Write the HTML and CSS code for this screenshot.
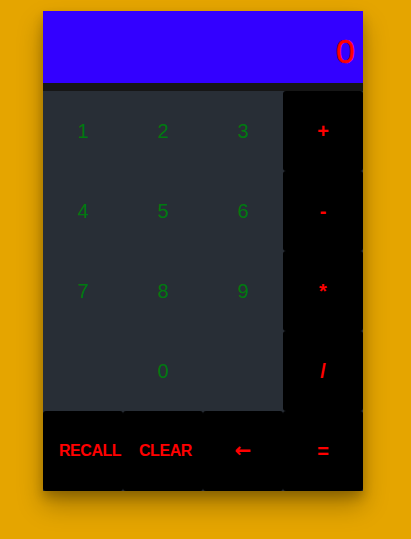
FILE: index.html
```html
<!DOCTYPE html>
<html>
<head>
<meta charset="utf-8">
<link rel="stylesheet" href="styles.css">
</head>
<body>
<div class="calc">
  <div class="display">0</div>
  <div class="bar"></div>
  <div class="keys">
    <div class="key num">1</div>
    <div class="key num">2</div>
    <div class="key num">3</div>
    <div class="key op">+</div>
    <div class="key num">4</div>
    <div class="key num">5</div>
    <div class="key num">6</div>
    <div class="key op">-</div>
    <div class="key num">7</div>
    <div class="key num">8</div>
    <div class="key num">9</div>
    <div class="key op">*</div>
    <div class="key num"></div>
    <div class="key num">0</div>
    <div class="key num"></div>
    <div class="key op">/</div>
    <div class="key op word">RECALL</div>
    <div class="key op word">CLEAR</div>
    <div class="key op arrow">&#8592;</div>
    <div class="key op">=</div>
  </div>
</div>
</body>
</html>
```
FILE: styles.css
```css
html, body {
  margin: 0;
  padding: 0;
  background: #e5a500;
  height: 100%;
}
body {
  padding: 11px 0 0 43px;
  box-sizing: border-box;
  font-family: "Liberation Sans", Arial, sans-serif;
}
.calc {
  width: 320px;
  background: #161616;
  box-shadow: 0 14px 24px rgba(0,0,0,0.28), 0 6px 10px rgba(0,0,0,0.2);
}
.display {
  height: 72px;
  background: #3300ff;
  color: #ff0000;
  font-size: 34px;
  display: flex;
  align-items: center;
  justify-content: flex-end;
  padding-right: 8px;
  padding-top: 9px;
  box-sizing: border-box;
  -webkit-text-stroke: 0.6px #ff0000;
}
.bar {
  height: 8px;
  background: #161616;
}
.keys {
  display: grid;
  grid-template-columns: repeat(4, 80px);
  grid-auto-rows: 80px;
  background: #282e36;
}
.key {
  padding: 0 16px;
  text-align: center;
  line-height: 80px;
  white-space: nowrap;
  min-width: 0;
}
.num {
  background: #282e36;
  color: #007a10;
  font-size: 20px;
}
.op {
  background: #000;
  color: #ff0000;
  font-weight: bold;
  font-size: 20px;
  border-radius: 3px;
}
.word {
  font-size: 16px;
  letter-spacing: -0.45px;
}
.arrow {
  font-family: "DejaVu Sans", sans-serif;
  font-size: 20px;
  line-height: 78px;
}
```
